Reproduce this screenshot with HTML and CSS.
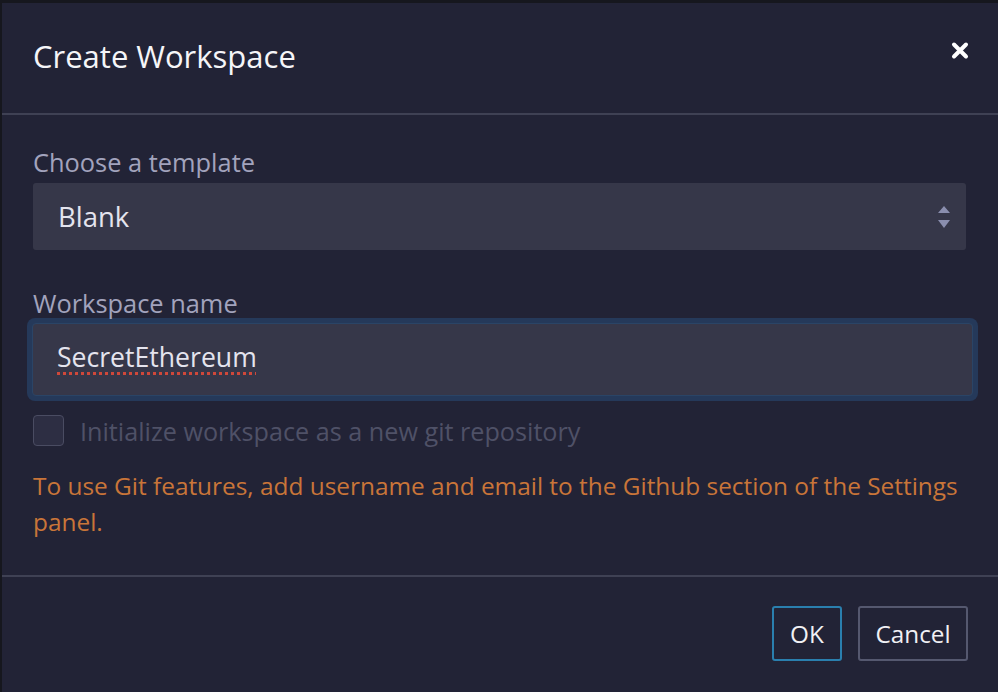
FILE: index.html
```html
<!DOCTYPE html>
<html lang="en">
<head>
<meta charset="utf-8">
<title>Create Workspace</title>
<link rel="stylesheet" href="styles.css">
</head>
<body>
<div class="modal">
  <div class="header">
    <h1 class="title">Create Workspace</h1>
    <button class="close" aria-label="Close">
      <svg width="18" height="19" viewBox="0 0 18 19"><path d="M3 3.5 L15 15.5 M15 3.5 L3 15.5" stroke="#ffffff" stroke-width="4" stroke-linecap="round"/></svg>
    </button>
  </div>
  <div class="body">
    <label class="label">Choose a template</label>
    <div class="select">
      <span>Blank</span>
      <svg class="arrows" width="12" height="22" viewBox="0 0 12 22"><path d="M6 0 L12 7 L0 7 Z M0 14 L12 14 L6 22 Z" fill="#8a8eae"/></svg>
    </div>
    <label class="label label-2">Workspace name</label>
    <div class="input-ring">
      <div class="input"><span class="misspelled">SecretEthereum</span></div>
    </div>
    <div class="check-row">
      <span class="checkbox"></span>
      <span class="check-label">Initialize workspace as a new git repository</span>
    </div>
    <p class="warning">To use Git features, add username and email to the Github section of the Settings panel.</p>
  </div>
  <div class="footer">
    <button class="btn btn-ok">OK</button>
    <button class="btn btn-cancel">Cancel</button>
  </div>
</div>
</body>
</html>
```
FILE: styles.css
```css
html, body {
  margin: 0;
  padding: 0;
  height: 100%;
}
body {
  background: #16171e;
  font-family: "Open Sans", "Noto Sans", sans-serif;
  overflow: hidden;
}
.modal {
  margin: 3px 0 0 2px;
  height: calc(100% - 3px);
  background: #222336;
  display: flex;
  flex-direction: column;
}
.header {
  height: 110px;
  flex: none;
  display: flex;
  align-items: center;
  justify-content: space-between;
  padding: 0 29px 0 31px;
  border-bottom: 2px solid #3f4154;
}
.title {
  margin: -4px 0 0;
  font-size: 31px;
  font-weight: 400;
  color: #f5f5f8;
}
.close {
  background: none;
  border: 0;
  padding: 0;
  display: flex;
  margin-top: -16px;
}
.body {
  padding: 32px 26px 0 31px;
  flex: none;
}
.label {
  display: block;
  font-size: 25.4px;
  color: #a2a3bd;
  line-height: 30px;
  margin-bottom: 6px;
}
.label-2 {
  margin-top: 38px;
}
.select {
  height: 67px;
  background: #363749;
  border-radius: 3px;
  display: flex;
  align-items: center;
  justify-content: space-between;
  padding: 0 16px 0 25px;
  margin-right: 6px;
  font-size: 27.5px;
  color: #e4e4ee;
}
.input-ring {
  margin: -6px -6px 0 -6px;
  padding: 5px;
  border-radius: 8px;
  background: #25395a;
}
.input {
  height: 73px;
  background: #363749;
  border: 1px solid #2a4466;
  border-radius: 4px;
  box-sizing: border-box;
  display: flex;
  align-items: center;
  padding: 0 0 6px 24px;
  font-size: 26.6px;
  color: #e4e4ee;
}
.misspelled {
  text-decoration: underline dotted #d0483a;
  text-decoration-thickness: 3px;
  text-underline-offset: 5px;
}
.check-row {
  display: flex;
  align-items: center;
  gap: 16px;
  margin-top: 14px;
  height: 31px;
}
.checkbox {
  width: 29px;
  height: 29px;
  border: 1px solid #4a4c62;
  border-radius: 4px;
  background: #2d2e43;
}
.check-label {
  font-size: 25.2px;
  color: #4f5167;
}
.warning {
  margin: 22px 0 0;
  font-size: 24.4px;
  line-height: 36px;
  color: #c97539;
}
.footer {
  margin-top: 35px;
  border-top: 2px solid #3f4154;
  display: flex;
  justify-content: flex-end;
  align-items: flex-start;
  gap: 16px;
  padding: 29px 30px 0 0;
  flex: 1;
}
.btn {
  height: 55px;
  background: transparent;
  border-radius: 3px;
  font-family: inherit;
  font-size: 24.3px;
  color: #f0f0f4;
  padding: 0;
}
.btn-ok {
  border: 2px solid #2a7fae;
  width: 70px;
}
.btn-cancel {
  border: 2px solid #55586f;
  width: 110px;
}
```
